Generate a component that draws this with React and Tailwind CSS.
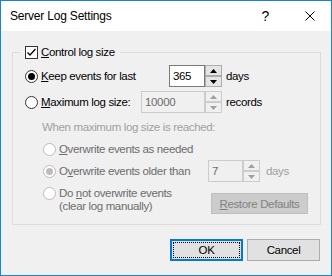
import React from 'react';

// Win10 style dialog: Server Log Settings

const Checkbox = () => (
  <span className="flex h-[13px] w-[13px] shrink-0 items-center justify-center border border-[#333333] bg-white">
    <svg width="11" height="11" viewBox="0 0 11 11">
      <path d="M1.5 5.5 L4 8 L9.5 2" stroke="#000" strokeWidth="1.3" fill="none" />
    </svg>
  </span>
);

const Radio = ({ checked = false, disabled = false }) => (
  <span
    className={
      disabled
        ? 'flex h-[13px] w-[13px] shrink-0 items-center justify-center rounded-full border border-[#bcbcbc] bg-white'
        : 'flex h-[13px] w-[13px] shrink-0 items-center justify-center rounded-full border border-[#333333] bg-white'
    }
  >
    {checked && (
      <span className={disabled ? 'h-[7px] w-[7px] rounded-full bg-[#bcbcbc]' : 'h-[7px] w-[7px] rounded-full bg-black'} />
    )}
  </span>
);

const Arrow = ({ up, disabled }) => (
  <svg width="7" height="4" viewBox="0 0 7 4">
    <path d={up ? 'M0 4 L3.5 0 L7 4 Z' : 'M0 0 L3.5 4 L7 0 Z'} fill={disabled ? '#a0a0a0' : '#000'} />
  </svg>
);

const SpinButtons = ({ disabled }) => (
  <div className="flex w-[17px] flex-col">
    <span
      className={
        disabled
          ? 'flex h-[11px] items-center justify-center border border-[#cccccc] bg-[#f0f0f0]'
          : 'flex h-[11px] items-center justify-center border border-[#adadad] bg-[#e5e5e5]'
      }
    >
      <Arrow up disabled={disabled} />
    </span>
    <span
      className={
        disabled
          ? 'flex h-[11px] items-center justify-center border border-[#cccccc] bg-[#f0f0f0]'
          : 'flex h-[11px] items-center justify-center border border-[#adadad] bg-[#e5e5e5]'
      }
    >
      <Arrow disabled={disabled} />
    </span>
  </div>
);

export default function App() {
  return (
    <div className="flex h-[276px] w-[332px] flex-col overflow-hidden whitespace-nowrap border border-[#1883d7] bg-[#f0f0f0] font-[family-name:'Liberation_Sans',Arial,sans-serif] text-[11.5px] leading-[14px] tracking-[-0.35px] text-black">
      {/* title bar */}
      <div className="flex h-[30px] shrink-0 items-center bg-white pl-[9px] pr-[16px]">
        <span className="flex-1 text-[12px] tracking-[-0.2px]">Server Log Settings</span>
        <span className="mr-[36px] text-[14px]">?</span>
        <svg width="10" height="10" viewBox="0 0 10 10">
          <path d="M0.5 0.5 L9.5 9.5 M9.5 0.5 L0.5 9.5" stroke="#000" strokeWidth="1" fill="none" />
        </svg>
      </div>

      <div className="flex flex-col pt-[14px]">
        <fieldset className="ml-[11px] mr-[10px] border border-[#dcdcdc] pb-[10px] pl-[12px] pr-[12px]">
          <legend className="-ml-[4px] pl-[4px] pr-[5px]">
            <span className="flex h-[14px] items-center gap-[3px]">
              <Checkbox />
              <span>
                <u>C</u>ontrol log size
              </span>
            </span>
          </legend>

          {/* keep events */}
          <div className="mt-[6px] flex h-[22px] items-center">
            <div className="flex w-[144px] items-center gap-[3px]">
              <Radio checked />
              <span>
                <u>K</u>eep events for last
              </span>
            </div>
            <div className="flex h-[22px]">
              <div className="flex w-[36px] items-center border border-[#7a7a7a] bg-white pl-[3px]">365</div>
              <SpinButtons />
            </div>
            <span className="ml-[4px]">days</span>
          </div>

          {/* maximum size */}
          <div className="mt-[4px] flex h-[22px] items-center">
            <div className="flex w-[116px] items-center gap-[3px]">
              <Radio />
              <span>
                <u>M</u>aximum log size:
              </span>
            </div>
            <div className="flex h-[22px]">
              <div className="flex w-[64px] items-center border border-[#cccccc] bg-[#f0f0f0] pl-[3px] text-[#6d6d6d]">
                10000
              </div>
              <SpinButtons disabled />
            </div>
            <span className="ml-[4px]">records</span>
          </div>

          <div className="ml-[17px] mt-[7px] text-[#a0a0a0]">When maximum log size is reached:</div>

          <div className="ml-[18px] mt-[8px] flex items-center gap-[3px] text-[#6d6d6d]">
            <Radio disabled />
            <span>
              <u>O</u>verwrite events as needed
            </span>
          </div>

          <div className="ml-[18px] mt-[4px] flex h-[22px] items-center">
            <div className="flex w-[165px] items-center gap-[3px] text-[#6d6d6d]">
              <Radio checked disabled />
              <span>
                O<u>v</u>erwrite events older than
              </span>
            </div>
            <div className="flex h-[22px]">
              <div className="flex w-[35px] items-center border border-[#cccccc] bg-[#f0f0f0] pl-[3px] text-[#6d6d6d]">7</div>
              <SpinButtons disabled />
            </div>
            <span className="ml-[6px] text-[#a0a0a0]">days</span>
          </div>

          <div className="ml-[18px] mt-[5px] flex items-start">
            <div className="flex flex-1 items-start gap-[3px] text-[#6d6d6d]">
              <span className="flex h-[13px] items-center">
                <Radio disabled />
              </span>
              <span className="leading-[13px]">
                Do <u>n</u>ot overwrite events
                <br />
                (clear log manually)
              </span>
            </div>
            <div className="mt-[6px] flex h-[21px] w-[97px] items-center justify-center border border-[#bfbfbf] bg-[#cccccc] text-[#838383]">
              <span>
                <u>R</u>estore Defaults
              </span>
            </div>
          </div>
        </fieldset>

        {/* dialog buttons */}
        <div className="mr-[11px] mt-[14px] flex justify-end gap-[4px]">
          <div className="h-[22px] w-[73px] border-2 border-[#0078d7] bg-[#e1e1e1] p-[1px]">
            <div className="flex h-full w-full items-center justify-center border border-dotted border-black">OK</div>
          </div>
          <div className="flex h-[22px] w-[73px] items-center justify-center border border-[#adadad] bg-[#e1e1e1]">
            Cancel
          </div>
        </div>
      </div>
    </div>
  );
}
